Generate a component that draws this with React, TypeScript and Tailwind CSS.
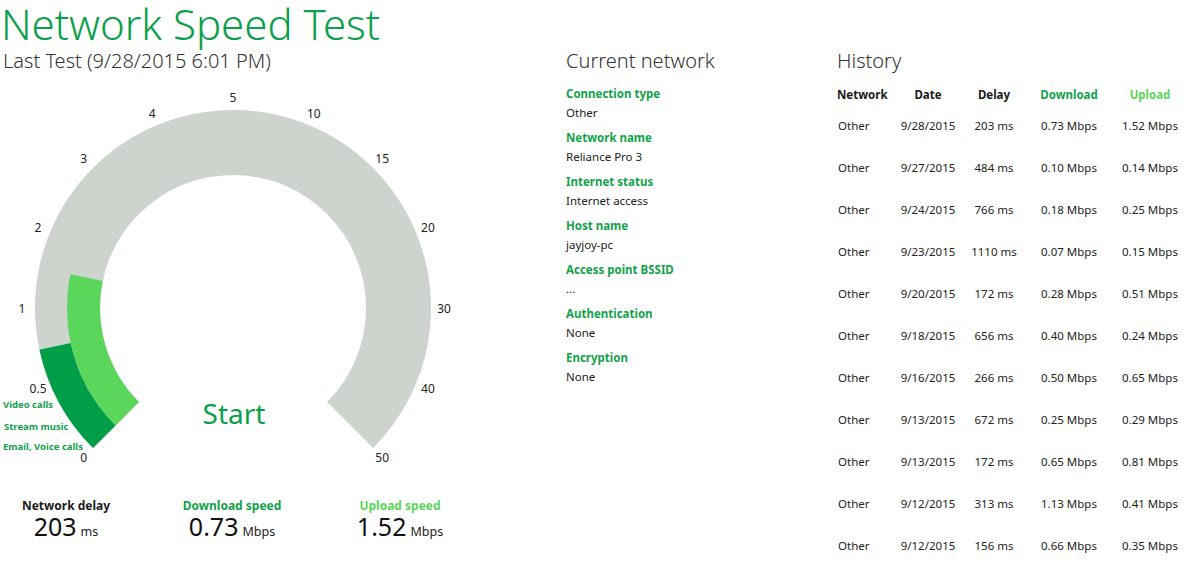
import React from "react";

const font = { fontFamily: '"Segoe UI", "Noto Sans", sans-serif' };

const LIGHT = "#5ad65a";
const GRAY = "#cdd3cd";

const CX = 233;
const CY = 234;
const R_OUT = 198;
const R_MID = 166;
const R_IN = 133;

const ticks = [0, 0.5, 1, 2, 3, 4, 5, 10, 15, 20, 30, 40, 50];

function toAngle(v: number) {
  let idx = ticks.length - 1;
  for (let i = 0; i < ticks.length - 1; i++) {
    if (v <= ticks[i + 1]) {
      idx = i + (v - ticks[i]) / (ticks[i + 1] - ticks[i]);
      break;
    }
  }
  return -135 + idx * 22.5;
}

function pt(r: number, deg: number) {
  const a = (deg * Math.PI) / 180;
  return [CX + r * Math.sin(a), CY - r * Math.cos(a)];
}

function sector(r1: number, r2: number, a0: number, a1: number) {
  const large = a1 - a0 > 180 ? 1 : 0;
  const [x0, y0] = pt(r2, a0);
  const [x1, y1] = pt(r2, a1);
  const [x2, y2] = pt(r1, a1);
  const [x3, y3] = pt(r1, a0);
  return `M${x0} ${y0} A${r2} ${r2} 0 ${large} 1 ${x1} ${y1} L${x2} ${y2} A${r1} ${r1} 0 ${large} 0 ${x3} ${y3} Z`;
}

function Gauge() {
  return (
    <svg width="470" height="410" viewBox="0 0 470 410" className="block">
      <path d={sector(R_IN, R_OUT, -135, 135)} fill={GRAY} />
      <path d={sector(R_MID, R_OUT, -135, toAngle(0.73))} fill="#009e47" />
      <path d={sector(R_IN, R_MID, -135, toAngle(1.52))} fill={LIGHT} />
      {ticks.map((t, i) => {
        const [x, y] = pt(211, -135 + i * 22.5);
        return (
          <text key={t} x={x} y={y} textAnchor="middle" dominantBaseline="central" fontSize="12" fill="#222">
            {t}
          </text>
        );
      })}
      <text x="3" y="334" fontSize="9.5" fontWeight="700" fill="#11a24a">Video calls</text>
      <text x="4" y="356" fontSize="9.5" fontWeight="700" fill="#11a24a">Stream music</text>
      <text x="3" y="376" fontSize="9.5" fontWeight="700" fill="#11a24a">Email, Voice calls</text>
      <text x="234" y="339" textAnchor="middle" dominantBaseline="central" fontSize="28" fill="#07a04a">Start</text>
    </svg>
  );
}

function Stat({ label, value, unit, color, width }: { label: string; value: string; unit: string; color: string; width: string }) {
  return (
    <div className={`${width} flex flex-col items-center`}>
      <div className="text-[12px] font-bold leading-[16px]" style={{ color }}>{label}</div>
      <div className="flex items-baseline gap-1 leading-[24px]">
        <span className="text-[25px] text-[#111]">{value}</span>
        <span className="text-[12.5px] text-[#222]">{unit}</span>
      </div>
    </div>
  );
}

const info = [
  ["Connection type", "Other"],
  ["Network name", "Reliance Pro 3"],
  ["Internet status", "Internet access"],
  ["Host name", "jayjoy-pc"],
  ["Access point BSSID", "..."],
  ["Authentication", "None"],
  ["Encryption", "None"],
];

const history = [
  ["9/28/2015", "203 ms", "0.73 Mbps", "1.52 Mbps"],
  ["9/27/2015", "484 ms", "0.10 Mbps", "0.14 Mbps"],
  ["9/24/2015", "766 ms", "0.18 Mbps", "0.25 Mbps"],
  ["9/23/2015", "1110 ms", "0.07 Mbps", "0.15 Mbps"],
  ["9/20/2015", "172 ms", "0.28 Mbps", "0.51 Mbps"],
  ["9/18/2015", "656 ms", "0.40 Mbps", "0.24 Mbps"],
  ["9/16/2015", "266 ms", "0.50 Mbps", "0.65 Mbps"],
  ["9/13/2015", "672 ms", "0.25 Mbps", "0.29 Mbps"],
  ["9/13/2015", "172 ms", "0.65 Mbps", "0.81 Mbps"],
  ["9/12/2015", "313 ms", "1.13 Mbps", "0.41 Mbps"],
  ["9/12/2015", "156 ms", "0.66 Mbps", "0.35 Mbps"],
];

export default function App() {
  return (
    <div className="w-[1191px] h-[561px] bg-white overflow-hidden text-[#1a1a1a]" style={font}>
      <h1 className="h-[48px] pl-[1px] text-[42px] font-light leading-[48px] text-[#0ca04c]">Network Speed Test</h1>

      <div className="flex">
        {/* Left: last test gauge */}
        <div className="w-[566px] shrink-0">
          <div className="pl-[3px] text-[20px] font-light leading-[26px] text-[#333]">Last Test (9/28/2015 6:01 PM)</div>
          <Gauge />
          <div className="flex pt-[14px]">
            <Stat label="Network delay" value="203" unit="ms" color="#1a1a1a" width="w-[132px]" />
            <Stat label="Download speed" value="0.73" unit="Mbps" color="#11a24a" width="w-[200px]" />
            <Stat label="Upload speed" value="1.52" unit="Mbps" color="#5ad65a" width="w-[136px]" />
          </div>
        </div>

        {/* Middle: current network */}
        <div className="w-[271px] shrink-0">
          <div className="text-[20px] font-light leading-[26px] text-[#333]">Current network</div>
          <div className="pt-[10px] text-[11.5px]">
            {info.map(([k, v]) => (
              <div key={k} className="mb-[6px]">
                <div className="font-bold leading-[19px] text-[#11a24a]">{k}</div>
                <div className="leading-[19px] text-[#222]">{v}</div>
              </div>
            ))}
          </div>
        </div>

        {/* Right: history */}
        <div className="flex-1">
          <div className="text-[20px] font-light leading-[26px] text-[#333]">History</div>
          <div className="pt-[10px] text-[11.5px]">
            <div className="grid grid-cols-[60px_62px_70px_80px_82px] h-[21px] items-center font-bold">
              <div>Network</div>
              <div className="text-center">Date</div>
              <div className="text-center">Delay</div>
              <div className="text-center text-[#11a24a]">Download</div>
              <div className="text-center text-[#5ad65a]">Upload</div>
            </div>
            {history.map((r, i) => (
              <div key={i} className="grid grid-cols-[60px_62px_70px_80px_82px] h-[42px] items-center text-[#222]">
                <div className="pl-[1px]">Other</div>
                {r.map((c, j) => (
                  <div key={j} className="text-center">{c}</div>
                ))}
              </div>
            ))}
          </div>
        </div>
      </div>
    </div>
  );
}
